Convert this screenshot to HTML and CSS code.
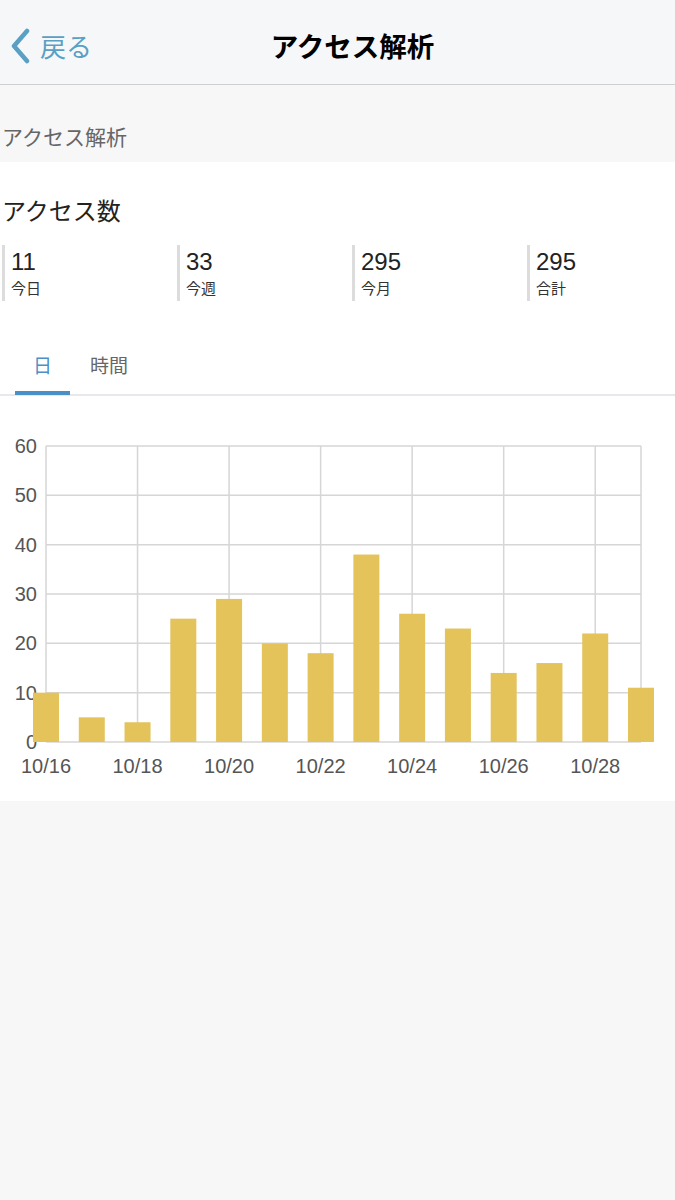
FILE: index.html
```html
<!DOCTYPE html>
<html lang="ja">
<head>
    <meta charset="UTF-8">
    <meta name="viewport" content="width=device-width, initial-scale=1.0">
    <title>アクセス解析</title>
    <link rel="stylesheet" href="styles.css">
</head>
<body>
    <div id="navbar">
        <a class="back" href="#">
            <svg class="chevron" width="22" height="36" viewBox="0 0 22 36">
                <path d="M18 3 L5 18 L18 33" fill="none" stroke="#5a9fc4" stroke-width="4.5" stroke-linecap="round" stroke-linejoin="round"/>
            </svg>
            <span>戻る</span>
        </a>
        <div class="title">アクセス解析</div>
    </div>

    <div class="section-head">アクセス解析</div>

    <div class="card">
        <div class="card-title">アクセス数</div>

        <div class="stats">
            <div class="stat"><div class="num">11</div><div class="label">今日</div></div>
            <div class="stat"><div class="num">33</div><div class="label">今週</div></div>
            <div class="stat"><div class="num">295</div><div class="label">今月</div></div>
            <div class="stat"><div class="num">295</div><div class="label">合計</div></div>
        </div>

        <div class="tabs">
            <div class="tab active">日</div>
            <div class="tab">時間</div>
        </div>

        <svg id="chart" width="675" height="405" viewBox="0 0 675 405"></svg>
    </div>

    <script>
        var valores = [10,5,4,25,29,20,18,38,26,23,14,16,22,11]
        var ns = "http://www.w3.org/2000/svg"
        var svg = document.getElementById("chart")
        var x0 = 46, x1 = 641, yTop = 50, yBot = 346
        var passo = (x1 - x0) / 13
        var unidade = (yBot - yTop) / 60

        function el(tag, attrs, txt){
            var e = document.createElementNS(ns, tag)
            for(var k in attrs){ e.setAttribute(k, attrs[k]) }
            if(txt){ e.textContent = txt }
            svg.appendChild(e)
            return e
        }

        // linhas horizontais + labels do eixo y
        for(var i = 0; i <= 6; i++){
            var y = yBot - i * 10 * unidade
            el("line", {x1: x0, x2: x1, y1: y, y2: y, stroke: "#d6d6d6", "stroke-width": 1.5})
            el("text", {x: 37, y: y + 7, "text-anchor": "end", class: "axis"}, String(i * 10))
        }

        // linhas verticais + labels do eixo x
        for(var d = 0; d <= 12; d += 2){
            var x = x0 + d * passo
            el("line", {x1: x, x2: x, y1: yTop, y2: yBot, stroke: "#d6d6d6", "stroke-width": 1.5})
            el("text", {x: x, y: yBot + 31, "text-anchor": "middle", class: "axis"}, "10/" + (16 + d))
        }
        el("line", {x1: x1, x2: x1, y1: yTop, y2: yBot, stroke: "#d6d6d6", "stroke-width": 1.5})

        // barras
        for(var i = 0; i < valores.length; i++){
            var cx = x0 + i * passo
            var h = valores[i] * unidade
            el("rect", {x: cx - 13, y: yBot - h, width: 26, height: h, fill: "#e3c35a"})
        }
    </script>
</body>
</html>
```

FILE: styles.css
```css
body{
    margin: 0;
    background: #f7f7f8;
    font-family: "Liberation Sans", "Noto Sans CJK JP", sans-serif;
    color: #222;
    overflow-x: hidden;
}

#navbar{
    height: 84px;
    border-bottom: 1px solid #cfcfd1;
    display: flex;
    align-items: center;
    justify-content: center;
    position: relative;
    background: #f6f7f9;
}

.back{
    position: absolute;
    left: 9px;
    top: 27px;
    display: flex;
    align-items: center;
    text-decoration: none;
    color: #5a9fc4;
    font-size: 26px;
}

.back span{
    margin-left: 9px;
    font-family: "Noto Sans CJK JP", sans-serif;
}

.title{
    font-size: 27.5px;
    font-weight: bold;
    color: #000;
    font-family: "Noto Sans CJK JP", sans-serif;
    margin: 6px 0 0 30px;
}

.section-head{
    height: 77px;
    box-sizing: border-box;
    padding: 36px 0 0 2px;
    font-size: 21px;
    line-height: 30px;
    color: #666;
    font-family: "Noto Sans CJK JP", sans-serif;
}

.card{
    background: #fff;
}

.card-title{
    padding: 31px 0 0 2px;
    height: 83px;
    box-sizing: border-box;
    font-size: 24px;
    line-height: 34px;
    color: #222;
    font-family: "Noto Sans CJK JP", sans-serif;
}

.stats{
    display: flex;
    padding-left: 2px;
    overflow: hidden;
}

.stat{
    flex-shrink: 0;
    width: 175px;
    height: 56px;
    border-left: 3px solid #dcdcdc;
    padding: 2px 0 0 6px;
    box-sizing: border-box;
}

.num{
    font-size: 24px;
    line-height: 30px;
    color: #222;
}

.label{
    font-size: 15px;
    line-height: 22px;
    color: #333;
    font-family: "Noto Sans CJK JP", sans-serif;
}

.tabs{
    display: flex;
    margin-top: 40px;
    padding-left: 15px;
    border-bottom: 2px solid #e6e8eb;
    height: 55px;
    box-sizing: border-box;
}

.tab{
    font-size: 19px;
    line-height: 28px;
    padding-top: 10px;
    color: #666;
    font-family: "Noto Sans CJK JP", sans-serif;
    text-align: center;
}

.tab.active{
    width: 55px;
    color: #4b8fc7;
    border-bottom: 4px solid #4b8fc7;
    margin-bottom: -1px;
    margin-right: 20px;
}

#chart{
    display: block;
}

.axis{
    font-size: 20px;
    fill: #555;
    font-family: "Liberation Sans", sans-serif;
}
```
